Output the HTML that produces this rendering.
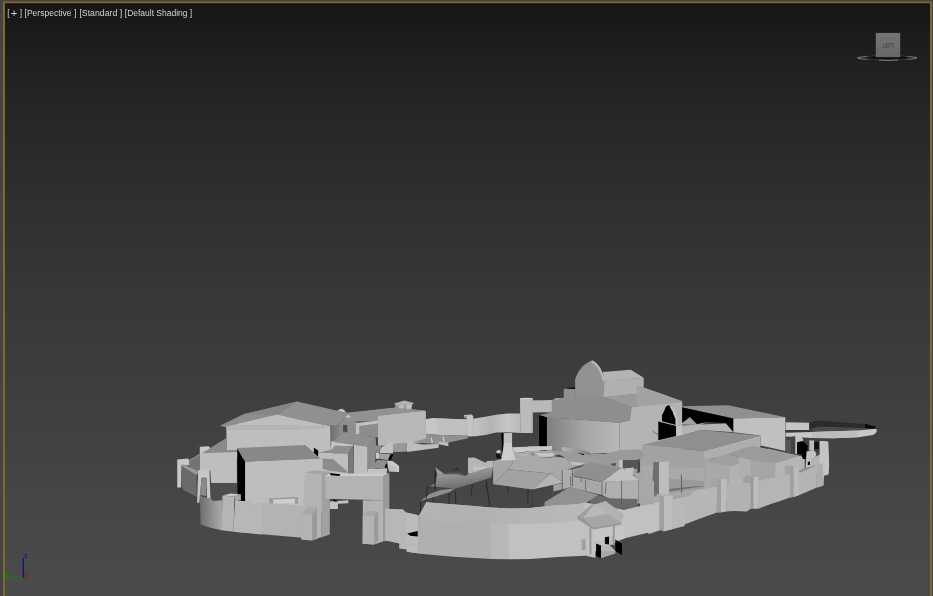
<!DOCTYPE html>
<html><head><meta charset="utf-8"><title>Perspective viewport</title>
<style>
html,body{margin:0;padding:0;background:#444;}
body{width:933px;height:596px;overflow:hidden;position:relative;font-family:"Liberation Sans","DejaVu Sans",sans-serif;}
#frame{position:absolute;left:0;top:0;width:933px;height:596px;background:#444;}
#gold{position:absolute;left:3px;top:1px;width:929px;height:600px;background:#80692b;}
#g1{position:absolute;left:3px;top:1px;width:929px;height:1px;background:#625637;}
#g3{position:absolute;left:5px;top:3px;width:925px;height:1px;background:#30291b;}
#vp{position:absolute;left:5px;top:3px;width:925px;height:593px;
background:linear-gradient(to bottom,#161616 0px,#161616 3px,#1e1e1e 49px,#252525 99px,#2f2f2f 199px,#383838 299px,#3f3f3f 399px,#464646 499px,#4b4b4b 593px);}
svg{position:absolute;left:0;top:0;}
</style></head>
<body>
<div id="frame"></div><div id="gold"></div><div id="vp"></div><div id="g1"></div><div id="g3"></div>
<svg style="will-change:transform" width="933" height="596" viewBox="0 0 933 596">
<defs>
<linearGradient id="cube" x1="0" y1="0" x2="0" y2="1"><stop offset="0" stop-color="#757575"/><stop offset="1" stop-color="#676767"/></linearGradient>
<linearGradient id="ringo" x1="0" y1="0" x2="1" y2="0"><stop offset="0" stop-color="#8c8c8c"/><stop offset="0.16" stop-color="#777"/><stop offset="0.2" stop-color="#2c2c2c"/><stop offset="0.8" stop-color="#2c2c2c"/><stop offset="0.84" stop-color="#777"/><stop offset="1" stop-color="#8c8c8c"/></linearGradient>
</defs>
<g id="model">
<polygon fill="#c8c8c8" points="177.2,459.6 188,458.5 189.7,460.9 189.7,465.4 181.6,464.9 181,487.6 177.2,487.6"/>
<polygon fill="#6a6a6a" points="181.6,464.9 196.6,474.6 196.6,497.1 183.7,489.9 181.6,486.7"/>
<polygon fill="#747474" points="189,460.6 199.6,454.4 199.6,470.2 197.1,474.5 189,465.9"/>
<polyline fill="none" stroke="#a8a8a8" stroke-width="0.8" points="189.4,460.4 199.6,454.4"/>
<polygon fill="#9a9a9a" points="182.9,464.1 198.7,471.4 196.6,474.9 181.6,466"/>
<polygon fill="#8d8d8d" points="219.9,425.8 243.3,414.2 297.3,401.6 277.9,414.5 226.7,427.4"/>
<polygon fill="#868686" points="243.3,414.2 297.3,401.6 277.9,414.5"/>
<polygon fill="#bebebe" points="226.4,426.7 277.9,414.5 332.7,427.4 332.7,457.7 226.4,457.7"/>
<polygon fill="#b4b4b4" points="226.4,426.7 234.4,425.1 320,424.5 332.7,427.4 332.7,430 226.4,430"/>
<polygon fill="#bebebe" points="226.7,426.4 277.9,414.5 329.5,426.4 320,424.5 234.4,424.8"/>
<polygon fill="#c6c6c6" points="199.8,446.7 208.7,446.2 210.3,448 210.3,454.4 199.8,454.4"/>
<polygon fill="#8a8a8a" points="201.4,453.5 226.4,438 226.4,449.9 237.3,449.9 237.3,453.5"/>
<polygon fill="#bebebe" points="199.8,453.3 236.9,452 236.9,483 211.1,483 210.3,470.6 199.8,470.6"/>
<polygon fill="#4d4d4d" points="211.1,483 236.9,483 236.9,502.8 211.1,502.8"/>
<polygon fill="#c6c6c6" points="198.2,469.9 209.5,468.9 210.6,502.8 207.1,501.2 206.4,477.8 201.6,477.8 199.3,502.8 197.1,502.8"/>
<polygon fill="#8a8a8a" points="201.6,478.3 206.4,478.3 206.1,496.3 200,494.7"/>
<polygon fill="#929292" points="346.2,412.7 395.8,407.5 425.9,410.8 400,413.7 378.4,416.3 378.4,421.5 343,421.5"/>
<polygon fill="#8e8e8e" points="342.7,420.2 356.9,421.5 356.9,435.4 347.3,432.8 342.7,432.2"/>
<polygon fill="#4c4c4c" points="343,424.7 347.3,424.9 347.3,432 343,431.7"/>
<polygon fill="#8c8c8c" points="359.6,425.6 378.8,423.4 378.8,437.8 359.6,434.9"/>
<polygon fill="#c2c2c2" points="355.9,423.1 378.8,420.6 378.8,423.6 359.6,425.9 359.6,434.8 355.9,434.2"/>
<polygon fill="#909090" points="296.8,401.5 337.6,410.7 347.3,413.3 343,420 336,425.9 325.8,425.3 300,420 277.9,414.5"/>
<polygon fill="#cacaca" points="337.4,410.7 339.2,409.5 342.1,408.8 344.6,410.5 346.4,412.7"/>
<polygon fill="#cacaca" points="344.9,417.8 348.3,414.8 351.3,417.2"/>
<polygon fill="#bebebe" points="298.9,420 325.8,425.3 330.1,425.8 330.3,449.9 298.9,445.6"/>
<polygon fill="#b5b5b5" points="298.9,426.5 325.2,425.3 325.2,428.5 298.9,429.4"/>
<defs><linearGradient id="gB" x1="0" x2="1" y1="0" y2="0"><stop offset="0" stop-color="#6c6c6c"/><stop offset="1" stop-color="#909090"/></linearGradient></defs>
<polygon fill="url(#gB)" points="330.1,425.8 336,425.9 343,420 343,432.4 331.4,441.5 330.5,449.9"/>
<polygon fill="#8f8f8f" points="343,432.2 347.3,432.4 375.8,437.6 367.7,446.4 353.7,444.7 331.7,441.5"/>
<polygon fill="#c4c4c4" points="331.7,441.5 353.7,444.7 352.6,446.4 335.4,445.8 331.7,449.6"/>
<polygon fill="#bebebe" points="353.7,444.7 367.7,446.4 367.7,477.3 353.7,477.3"/>
<polygon fill="#8a8a8a" points="367.7,446.4 375.8,437.6 375.8,451.6 374.1,477.3 367.7,477.3"/>
<polygon fill="#8f8f8f" points="331.8,449.6 335.4,445.8 352.8,446.3 348.3,453.4 318.3,452.8"/>
<polygon fill="#bebebe" points="318.3,453.1 348.3,453.4 348.3,477.3 318.3,477.3"/>
<polygon fill="#7a7a7a" points="348.3,453.4 352.8,446.3 353.7,477.3 348.3,477.3"/>
<polygon fill="#8d8d8d" points="317.6,456.7 321.4,458.5 333,459 347.3,471.4 347.3,472.9 328.3,470.4 321.4,468.6 321.4,458.7"/>
<polygon fill="#000" points="314,447.8 317.7,451.6 317.7,456.1 314,452.6"/>
<polygon fill="#bcbcbc" points="378.4,416.3 400,412.9 424.6,410.7 424.6,443 400,443.2 389.4,442.5 388.7,445.3 378.4,445.8"/>
<polygon fill="#8c8c8c" points="369.8,449 374.1,445.1 381.8,447 379.5,451.8"/>
<polygon fill="#c2c2c2" points="381.8,447 389.2,443.4 392.6,443 392.6,452.8 379.5,452.2"/>
<polygon fill="#c8c8c8" points="376.3,452.6 379.1,452.6 379.1,458.2 376.3,458.2"/>
<polygon fill="#909090" points="379.5,453.7 389.4,454.4 387.5,459.7 379.5,458.6"/>
<polygon fill="#000" points="391.3,454.2 393,454.8 390.4,459.7 388.7,459.1"/>
<polygon fill="#c6c6c6" points="425.6,419.3 432.3,418.1 466.7,419.5 466.7,435.6 436.6,434.8 425.6,433.7"/>
<polygon fill="#c0c0c0" points="437.1,418.4 466.7,419.5 466.7,435.6 437.1,434.8"/>
<polygon fill="#909090" points="412.4,442.3 425.6,433.7 436.6,434.8 467.2,435.8 468.3,438.2 448.9,442.5 438.7,444.2"/>
<polygon fill="#bdbdbd" points="406.5,440.1 410.8,439.3 412.5,442.7 422.6,444.6 438.7,444 438.7,447.8 407.1,452.1"/>
<polygon fill="#bdbdbd" points="438.7,441.4 448.4,442.5 448.4,446.3 438.7,444.2"/>
<polygon fill="#9a9a9a" points="393.1,444.4 406.5,442.3 407.1,451.1 393.1,452.1"/>
<polygon fill="#d0d0d0" points="430.7,437.4 431.9,437.4 432.9,442.9 431.5,442.9"/>
<polygon fill="#d0d0d0" points="442.5,436.4 443.7,436.4 444.8,441.4 443.4,441.4"/>
<polygon fill="#bdbdbd" points="395.3,404.2 412.1,404.2 411.5,409.2 395.8,408.5"/>
<polygon fill="#9a9a9a" points="395.3,404.2 399.2,404.2 399,408.5 395.8,408.3"/>
<polygon fill="#8e8e8e" points="404.2,404 406.1,404 406.1,409 404.2,409"/>
<polygon fill="#b2b2b2" points="394.1,403.4 404.4,400.6 414,403.1 412.1,404.7 395.6,404.7"/>
<polygon fill="#929292" points="367.9,410.7 395.6,407.8 425.9,410.9 378.1,416.1 367.9,417.1"/>
<polygon fill="#b8b8b8" points="378.1,416.1 425.9,410.9 425.9,438.4 412.4,442.3 410.8,439.3 406.5,440.1 406.5,442.3 393.1,444.4 378.1,445.7"/>
<polygon fill="#8f8f8f" points="369.5,448.7 375.4,445.5 381,448.2 378.6,452.1 369.5,450.4"/>
<polygon fill="#c2c2c2" points="380.7,448.2 387.7,444.6 389.3,442.3 392.8,442.8 393,452.1 380.2,453.2"/>
<polygon fill="#c8c8c8" points="375.9,453 378.6,453 378.6,458.6 375.9,458.6"/>
<polygon fill="#000" points="390.9,454.6 393.2,454.6 391.1,459.4 389.3,459.4"/>
<polygon fill="#8a8a8a" points="368,446.1 375.7,438.4 375.7,452.2 370.6,459.9 368,467.6"/>
<polygon fill="#8c8c8c" points="370.2,448.7 374.9,445.3 382.2,447 380,451.5"/>
<polygon fill="#c2c2c2" points="380,451.5 382.2,447 387.7,444.4 389.5,442.7 392.9,442.7 392.9,453.5 380.4,452.7"/>
<polygon fill="#999" points="392.9,444 406.6,442.7 406.6,451.5 392.9,451.9"/>
<polygon fill="#c8c8c8" points="376.2,452.6 378.8,452.6 378.8,458.3 376.2,458.3"/>
<polygon fill="#a0a0a0" points="379.2,453.4 390.3,454 387.7,460 379.2,458.7"/>
<polygon fill="#000" points="391.2,454.3 393,454.6 390.3,460 388.6,459.5"/>
<polygon fill="#8f8f8f" points="371,468.1 377.4,459.9 387,460.4 385.2,468.1"/>
<polygon fill="#000" points="385.6,464.6 387.1,464.2 386.4,468.1 384.7,468.1"/>
<polygon fill="#cacaca" points="386.9,460.7 392.9,461.2 399.1,465.9 399.1,472 389,471.5 387.7,464.6"/>
<polygon fill="#bfbfbf" points="388.3,464.3 396.3,466.9 396.3,471.2 389.2,471"/>
<polygon fill="#c4c4c4" points="368.4,469 386.9,468.3 386.9,473.8 366.3,474.6"/>
<polygon fill="#000" points="237.2,448 245.1,461.7 245.1,510 237.7,508.4"/>
<polygon fill="#888" points="237.2,448 305.3,445.1 320.6,458.5 245.1,461.7"/>
<polygon fill="#bebebe" points="245.1,461.7 320.6,458.5 322.7,459 322.7,512.4 245.1,510"/>
<polygon fill="#000" points="313.9,447.7 318.2,450.6 318.2,456.4 313.9,452.8"/>
<polygon fill="#9c9c9c" points="269.1,498.3 298.1,497.1 298.1,503.8 269.1,503.8"/>
<polygon fill="#cfcfcf" points="273.1,499.6 294.9,498.8 294.9,503.8 273.1,503.8"/>
<defs><linearGradient id="gA" x1="0" x2="1" y1="0" y2="0"><stop offset="0" stop-color="#6e6e6e"/><stop offset="1" stop-color="#ababab"/></linearGradient></defs>
<polygon fill="url(#gA)" points="199.8,494.6 203,497.1 210.3,498.3 213.2,501.1 221.9,500.3 221.9,530.2 210.3,527.7 200.6,524.4"/>
<polygon fill="#b3b3b3" points="235.2,501.1 248.9,501.1 253.8,504.3 257.8,503.5 263.4,502.7 303.7,505.9 302.4,537.7 233.6,531.7"/>
<polygon fill="#b7b7b7" points="235.2,501.1 248.9,501.1 253.8,504.3 257.8,503.5 262.6,502.9 261.8,534.4 233.6,531.7"/>
<polygon fill="#c4c4c4" points="222.4,495.4 230.4,493.5 240.9,494.3 234.4,496.4"/>
<polygon fill="#b5b5b5" points="222.4,495.8 234.4,496.4 233.6,531.7 221.6,530.2"/>
<polygon fill="#a6a6a6" points="234.4,496.4 240.9,494.3 240.9,500.6 235.2,501.2"/>
<polygon fill="#a8a8a8" points="302.1,513.5 307.7,506.7 317.4,507.5 312.6,514.1"/>
<polygon fill="#b6b6b6" points="302.1,513.5 312.6,514.1 311.8,540.4 301.8,539.7"/>
<polygon fill="#9a9a9a" points="312.6,514.1 317.4,507.5 317.4,538.9 311.8,540.4"/>
<polygon fill="#a5a5a5" points="304.8,472.9 312.1,470.5 329.8,471.6 321.7,474.2"/>
<polygon fill="#b3b3b3" points="304.8,473.7 321.7,474.2 321.7,537.3 312.1,539.7 301.6,538.9"/>
<polygon fill="#a0a0a0" points="321.7,474.2 329.8,471.6 329.8,534.4 321.7,537.3"/>
<polygon fill="#cdcdcd" points="325,476.1 329.8,473.5 389.4,473.5 383,476.1"/>
<polygon fill="#b3b3b3" points="325,476.1 383,476.1 383,500.3 325.8,498.7"/>
<polygon fill="#000" points="329.8,472.9 340.3,474.2 339.5,476.1 330.6,475.3"/>
<polygon fill="#9a9a9a" points="383,476.1 389.4,473.5 389.4,540.6 383,541.4"/>
<polygon fill="#b3b3b3" points="362.8,500.3 383,500.3 383,541.4 374.1,544.6 362.8,543.8"/>
<polygon fill="#c2c2c2" points="329.8,501.6 348.3,500.3 348.3,503.2 337.9,503.8 337.9,509.1 329.8,509.1"/>
<polygon fill="#000" points="333,498.7 337.9,501.6 333.8,501.6"/>
<polygon fill="#a8a8a8" points="301.6,514.8 308.1,506.7 316.9,507.5 312.1,514.8"/>
<polygon fill="#b3b3b3" points="301.6,514.8 312.1,514.8 312.1,540.2 301.3,538.9"/>
<polygon fill="#999" points="312.1,514.8 316.9,507.5 316.9,537.3 312.1,540.2"/>
<polygon fill="#a8a8a8" points="363.2,516.1 367.7,510.7 378.1,511.6 374.1,516.4"/>
<polygon fill="#b3b3b3" points="362.8,516.1 374.1,516.4 374.1,544.6 362.5,543.8"/>
<polygon fill="#999" points="374.1,516.4 378.1,511.6 378.1,540.6 374.1,544.6"/>
<defs><linearGradient id="gD" x1="0" x2="1" y1="0" y2="0"><stop offset="0" stop-color="#c4c4c4"/><stop offset="0.38" stop-color="#b4b4b4"/><stop offset="0.72" stop-color="#c6c6c6"/><stop offset="1" stop-color="#bababa"/></linearGradient></defs>
<polygon fill="url(#gD)" points="473.1,418.8 485.4,416.8 496.2,414.8 508,413.6 520.4,413.5 520.4,432.9 508,432.3 496.2,432.4 485.4,435.1 473.1,436.5"/>
<polygon fill="#c4c4c4" points="464,415.1 471.5,414.4 473.2,416.1 473.2,436.1 469.3,436.7 466.6,435.5 466.6,418.3 464,417.8"/>
<polygon fill="#8a8a8a" points="464,415.7 466.6,416 466.6,418.3 464,417.8"/>
<polygon fill="#bbbbbb" points="520,398.3 532.7,398 532.7,432.9 520.4,432.9"/>
<polygon fill="#adadad" points="531.4,399 532.7,399 532.7,432.9 531.4,432.9"/>
<polygon fill="#cbcbcb" points="520,398.3 525.2,397.7 532.7,398 532.7,399 520,399.2"/>
<polygon fill="#c4c4c4" points="532.7,400.9 568.2,399.2 568.2,410.8 532.7,412.5"/>
<polygon fill="#6a6a6a" points="539.2,415.1 557.4,413.1 557.4,417.2 547.2,417.7"/>
<polygon fill="#000" points="539.2,415.6 547.2,417.8 547.2,445.8 539.2,444.7"/>
<polygon fill="#8c8c8c" points="547.2,417.4 557.4,416.4 557.4,445.2 547.2,445.8"/>
<polygon fill="#000" points="501.3,432.9 503.7,432.9 503.7,453.7 502.2,453.7"/>
<polygon fill="#c0c0c0" points="503.7,432.9 512.1,432.9 512.1,453.7 503.7,453.7"/>
<polygon fill="#cacaca" points="512.1,447.2 550,445.9 568.2,446.1 568.2,450.4 531.6,451.1 514.4,453.2"/>
<polygon fill="#b0b0b0" points="515.5,453.2 531.6,451.5 568.2,450.6 568.2,457.1 518.7,457.1"/>
<polygon fill="#888" points="530.6,452.6 534.9,452.6 534.9,455.3 530.6,455.3"/>
<polygon fill="#c6c6c6" points="535.9,453.1 568.2,452.8 568.2,456.2 535.9,455.8"/>
<polygon fill="#a9a9a9" points="511.8,449.9 518.7,453.1 518.7,457.3 515.3,460.7 513.4,460.7"/>
<polygon fill="#cdcdcd" points="504.2,450.6 512.1,450.4 515.5,460.1 501.3,460.7"/>
<polygon fill="#c4c4c4" points="496.2,451.5 498.9,449.9 500.7,451.5 499.4,453.8 497.3,453.2"/>
<polygon fill="#111" points="496.2,453.8 498.5,453.4 500.5,459 496.4,457.7"/>
<polygon fill="#b6b6b6" points="468,457.7 474.5,457.4 485.4,462.7 487.1,461.1 493.2,460.8 493.2,467.6 485.4,468.9 473.1,473.2 468,473.6"/>
<polygon fill="#c6c6c6" points="473.1,466.5 482.2,467.2 485.4,466.5 485.4,468.2 473.8,470"/>
<defs><linearGradient id="gC1" x1="0.2" x2="0.6" y1="0" y2="1"><stop offset="0" stop-color="#b0b0b0"/><stop offset="0.5" stop-color="#8a8a8a"/><stop offset="1" stop-color="#6a6a6a"/></linearGradient></defs>
<defs><linearGradient id="gC1" x1="0" x2="1" y1="0" y2="0"><stop offset="0" stop-color="#a6a6a6"/><stop offset="0.35" stop-color="#a0a0a0"/><stop offset="0.62" stop-color="#808080"/><stop offset="0.85" stop-color="#9c9c9c"/><stop offset="1" stop-color="#a4a4a4"/></linearGradient><linearGradient id="gC0" x1="0" x2="0" y1="0" y2="1"><stop offset="0" stop-color="#222"/><stop offset="1" stop-color="#6a6a6a"/></linearGradient></defs>
<polygon fill="url(#gC0)" points="447.6,472.5 457.5,467.7 462.7,473.7 464.7,476 456.2,474.8 445,474.2"/>
<polygon fill="#9a9a9a" points="435.2,467.3 444.7,474.2 437.5,474.8"/>
<polygon fill="url(#gC1)" points="437.3,474.6 445,474.2 457,474.2 464.7,476 470.7,472.9 481.9,470.3 493.2,466.4 491.3,477.2 483.6,479.9 471.6,483.7 455.3,488.5 430,486.2 435.6,482.8 436.4,478.4"/>
<polygon fill="#8e8e8e" points="420.1,501.2 429.6,494.1 440.7,490 455.3,488.3 449.3,492.2 436.4,496.2"/>
<polyline fill="none" stroke="#1c1c1c" stroke-width="1" points="435.3,470.3 434.9,490"/>
<polyline fill="none" stroke="#1c1c1c" stroke-width="0.7" points="427.4,485.9 425.8,502.8"/>
<polyline fill="none" stroke="#1c1c1c" stroke-width="0.7" points="433.3,497.7 433,502"/>
<polyline fill="none" stroke="#1c1c1c" stroke-width="0.7" points="449.1,493.2 449.1,503.2"/>
<polyline fill="none" stroke="#1c1c1c" stroke-width="0.7" points="455.6,491.6 455.6,503.8"/>
<polyline fill="none" stroke="#1c1c1c" stroke-width="0.7" points="472.5,484.3 470.9,495.6"/>
<polyline fill="none" stroke="#1c1c1c" stroke-width="0.7" points="486.2,480.3 489.7,506.1"/>
<polyline fill="none" stroke="#1c1c1c" stroke-width="0.7" points="420.6,501.2 420.6,514.4"/>
<polyline fill="none" stroke="#1c1c1c" stroke-width="0.7" points="508.3,486.7 508.3,491.6"/>
<polyline fill="none" stroke="#1c1c1c" stroke-width="0.7" points="528.1,489.1 527.8,503.6"/>
<polyline fill="none" stroke="#1c1c1c" stroke-width="0.7" points="532.1,488.3 532.4,506.9"/>
<polygon fill="#b8b8b8" points="531.6,400.3 551.7,400.7 551.7,412.5 531.6,412"/>
<polygon fill="#b4b4b4" points="602.8,371.9 630.7,369.7 643.7,377.7 604.4,380.9"/>
<polygon fill="#b0b0b0" points="603.8,380.6 643.7,377.7 643.7,393.2 602.8,397.4"/>
<path fill="#929292" d="M575.1,398.3 L575.1,379.3 C578.3,369.3 584.8,363.2 590.9,361 C597.7,362.9 602.5,372.6 604.6,381.4 L603.3,398.3 Z"/>
<path fill="none" stroke="#b8b8b8" stroke-width="2.2" d="M591.5,361.3 C597.7,363.5 601.9,372.6 603.8,380.9"/>
<polygon fill="#000" points="567.4,388 575.1,387.4 575.1,389.3 567.4,389.3"/>
<polygon fill="#909090" points="563.8,388.7 575.4,389 575.4,399.1 563.8,399.1"/>
<polygon fill="#8e8e8e" points="551.7,400.3 555.5,398.3 563.8,397.7 603.3,397 631.5,406.7 629.9,420.2 619.4,422.8 546.1,417 539.7,415.2 551.7,412.2"/>
<polygon fill="#c0c0c0" points="555,398.7 560.6,398 555.8,399.9"/>
<polygon fill="#9b9b9b" points="603.3,397 643.7,392.9 643.7,388.3 682.1,401.1 682.1,404.5 631.5,407"/>
<polygon fill="#b4b4b4" points="631.5,407 682.1,404.5 682.1,453.1 619.4,453.1 619.4,422.8 629.9,420.2"/>
<defs><linearGradient id="gE" x1="0" x2="1" y1="0" y2="0"><stop offset="0" stop-color="#7e7e7e"/><stop offset="0.55" stop-color="#a8a8a8"/><stop offset="1" stop-color="#b8b8b8"/></linearGradient></defs>
<polygon fill="url(#gE)" points="546.1,417 619.4,422.8 619.4,453.1 546.1,453.1"/>
<polygon fill="#000" points="539.3,415.2 546.9,417.3 546.9,453.1 539.3,453.1"/>
<path fill="#000" d="M658.1,440.2 L658.1,421.7 L662.1,414.8 L664.7,409 L668.6,404.8 L672.4,409.6 L674.4,414.8 L677.4,418 L677.4,435.4 L666.9,438.3 Z"/>
<polyline fill="none" stroke="#c8c8c8" stroke-width="2" points="668.9,404.9 673.1,409.9 675,415.1 677.9,418.3 677.9,425.7"/>
<polygon fill="#888" points="652.4,430.6 658.1,433.8 658.1,435.4 653.1,432.2"/>
<polygon fill="#9b9b9b" points="551.5,450.7 590.2,452.9 605.2,453.7 619.2,450.3 637.4,449 637.4,475.4 551.5,472.2"/>
<polygon fill="#c8c8c8" points="527.9,446.4 552,445.9 552,449.7 527.9,451.4"/>
<polygon fill="#a8a8a8" points="527.9,451.4 551.5,450.2 555.3,454 540.7,456.8 527.9,456.1"/>
<polygon fill="#c6c6c6" points="534.3,452.9 554.7,453.5 553.1,456.1 540.7,456.8"/>
<polygon fill="#888" points="530.9,452.7 534.3,452.9 534.8,455.6 531.1,455.3"/>
<defs><linearGradient id="gF" x1="0" x2="1" y1="0" y2="0"><stop offset="0" stop-color="#b4b4b4"/><stop offset="1" stop-color="#7c7c7c"/></linearGradient></defs>
<polygon fill="url(#gF)" points="562.2,446.9 578.3,448.6 590.2,452.5 591.4,455.3 581.6,454.6 562.2,450.7"/>
<polygon fill="#111" points="577.3,453.1 584.2,454 583.7,455.3"/>
<polygon fill="#444" points="553.1,456.3 559,454.5 565.4,457.7"/>
<polygon fill="#c2c2c2" points="619.2,459.9 622.6,459.9 622.6,468.1 619.2,467.1"/>
<polygon fill="#555" points="623,459.9 637.4,459.9 637.4,469 623,467.9"/>
<polygon fill="#555" points="610,463.8 615.9,463.1 615.9,465.8 612.7,465.8"/>
<polygon fill="#a6a6a6" points="493.1,461.1 501.1,459 517.2,456.3 508.1,469.2 493.1,484.2"/>
<polygon fill="#a9a9a9" points="508.1,469.2 517.2,456.3 564.5,457.9 574.2,465.4 550.5,473.5"/>
<polygon fill="#a2a2a2" points="493.1,484.2 508.1,469.2 550.5,473.5 532.3,489.6"/>
<polygon fill="#b5b5b5" points="532.3,489.6 550.5,473.5 563.4,482.6"/>
<polygon fill="#a9a9a9" points="550.5,473.5 574.2,465.4 574.2,480.4 563.4,482.6"/>
<polygon fill="#cdcdcd" points="504.1,442.9 511.1,442.9 515.6,460 501.1,460.7"/>
<polygon fill="#c4c4c4" points="496.3,451.4 499,449.8 501.1,451.4 499.5,453.6 497.4,453.4"/>
<polygon fill="#111" points="496.3,453.8 499.7,453.6 501.1,459 496.3,457"/>
<polygon fill="#acacac" points="562.2,470.3 572.5,469 572.5,486.4 562.2,489.6"/>
<polygon fill="#a4a4a4" points="553.1,485.1 562.2,483.2 562.2,489.6 553.1,491.6"/>
<polygon fill="#c2c2c2" points="569.7,461.5 584.2,463.1 580.5,465.3 573,464.9"/>
<polygon fill="#555" points="567.1,469.2 585,464.2 581.6,467.1 572.5,469.6"/>
<polygon fill="#a8a8a8" points="570.8,476 602,482.1 602,495 570.8,487.5"/>
<polygon fill="#afafaf" points="602,482.1 638.7,479.3 638.7,503.8 621.5,504.8 602,495"/>
<polygon fill="#8f8f8f" points="570.2,475 590.2,462 619.2,467.4 621.5,467.9 602,482.1"/>
<polygon fill="#c0c0c0" points="602,482.1 621.5,468.1 638.7,479.1 638.7,480"/>
<polygon fill="#919191" points="544.5,502.3 569.7,486.8 598.7,495 590.2,500.4 575.1,508.7 544.5,508.7"/>
<polygon fill="#6a6a6a" points="590.2,500.4 598.7,495.2 609.5,498.2 637.4,498.9 637.4,508.7 590.2,508.7"/>
<polyline fill="none" stroke="#555" stroke-width="0.7" points="562.2,470.3 562.2,489.6"/>
<polyline fill="none" stroke="#555" stroke-width="0.7" points="572.5,469.2 572.5,486.4"/>
<polyline fill="none" stroke="#555" stroke-width="0.7" points="570.6,476.3 570.6,486.2"/>
<polyline fill="none" stroke="#555" stroke-width="0.7" points="585.6,480.3 585.6,490.5"/>
<polyline fill="none" stroke="#555" stroke-width="0.7" points="602,482.3 602,495"/>
<polyline fill="none" stroke="#555" stroke-width="0.7" points="621.5,480.8 621.5,504.4"/>
<polyline fill="none" stroke="#555" stroke-width="0.7" points="553.1,485.6 553.1,495.9"/>
<polyline fill="none" stroke="#555" stroke-width="0.7" points="532.1,489 532.1,504.4"/>
<polyline fill="none" stroke="#555" stroke-width="0.7" points="581.3,478.7 581.3,482.4"/>
<polyline fill="none" stroke="#555" stroke-width="0.7" points="606,482.4 605.2,494.2"/>
<polygon fill="#909090" points="681.7,406.2 728.1,405.2 785.3,417.3 733.4,418.4 680.3,407"/>
<polygon fill="#000" points="680.3,407 733.4,418.4 733.4,432.2 725.9,423.1 706.6,422.1 696.9,424 689.9,417 680.3,424.2"/>
<polygon fill="#a2a2a2" points="680.3,424.6 689.9,417.2 696.9,424.2 706.8,422.3 700.2,424.9"/>
<polygon fill="#b4b4b4" points="681.9,425.6 700.2,424.6 725.9,423.4 733.4,432.2 701.2,430 681.9,435.6"/>
<polygon fill="#c0c0c0" points="733.4,418.4 785.3,417.3 785.3,450.9 760.4,445.5 760.4,435.6 733.4,432.2"/>
<polygon fill="#a2a2a2" points="636.8,385 665.2,395 682.1,401.4 682.1,402.7 636.8,406.4"/>
<polygon fill="#b3b3b3" points="636.8,406.4 682.1,402.3 682.1,435.8 642.1,445.5 636.8,446.6"/>
<path fill="#000" d="M662,421.3 L662,415 L664.2,411.1 L665.8,406.8 L668.5,405.1 L671.1,407.2 L673.3,411.1 L674.9,416.5 L676.1,418.2 L676.1,425.1 Z"/>
<polygon fill="#000" points="658.3,421.5 676.1,425.9 676.1,436 658.3,440.3"/>
<polyline fill="none" stroke="#c4c4c4" stroke-width="2.2" points="670.9,406.6 673.7,411.3 675.7,417.1 676.6,418.4 676.6,425.3"/>
<polygon fill="#c4c4c4" points="676.3,425.8 682.1,425.6 682.1,435 676.3,436.2"/>
<polygon fill="#777" points="652.4,430.4 658.3,434.3 658.3,435.8 652.9,431.7"/>
<polygon fill="#8f8f8f" points="642.1,445.1 676.1,436.5 701.2,430 760.4,435.6 704.4,451.1"/>
<polygon fill="#a2a2a2" points="642.1,445.1 704.4,451.1 704.4,480.9 642.1,480.9"/>
<polygon fill="#aeaeae" points="704,450.9 760.4,435.6 760.4,447.6 727.3,454.9 704,460.5"/>
<polygon fill="#a3a3a3" points="640,456.1 753.1,460.9 753.1,493.2 717.7,501.2 672.6,507.7 640,510.9"/>
<polygon fill="#a9a9a9" points="641.9,465.8 704,468.2 704,488.3 641.9,504.4"/>
<polygon fill="#9b9b9b" points="727.3,453.7 753.1,446.4 800,456.1 774.9,463.5 749.9,460.3"/>
<polygon fill="#a5a5a5" points="750.2,460.3 774.9,463.8 774.9,478.7 750.2,482.2"/>
<polygon fill="#b5b5b5" points="774.9,463.8 800,456.1 804.7,457.7 804.7,477.1 774.9,478.7"/>
<polygon fill="#a0a0a0" points="705.6,460.9 727.3,453.7 750.2,460.3 729.7,466.7"/>
<polygon fill="#a9a9a9" points="704.8,461.6 729.7,466.7 729.7,488.3 704.8,491.6"/>
<polygon fill="#b3b3b3" points="729.7,466.7 750.7,460.3 750.7,482.2 729.7,486.7"/>
<polygon fill="#9a9a9a" points="669.3,478.7 704,481.1 704,488.3 669.3,493.2"/>
<polygon fill="#6e6e6e" points="669.3,489.1 698.3,485.9 704.8,486.1 669.3,491.2"/>
<polyline fill="none" stroke="#555" stroke-width="0.8" points="681.4,474.6 681.7,493.2"/>
<polygon fill="#6e6e6e" points="653.5,461.9 659,461.9 659,495.6 653.5,496.7 651.3,502"/>
<polygon fill="#bdbdbd" points="659,461.9 668.7,461.4 668.7,494.8 659,495.6"/>
<polygon fill="#b8b8b8" points="648.4,503.2 660,501.7 660,530.2 648.4,534.2"/>
<polygon fill="#b6b6b6" points="672.6,499.9 689.5,495.6 693.5,491.6 698.3,489.9 716.9,486.7 716.9,512.5 698.3,519.3 672.6,528.9"/>
<polygon fill="#b2b2b2" points="726.5,485.4 733.8,483.8 742.6,482.2 751.5,481.2 751.5,508.3 746.7,511.5 733.8,511 726.5,511.5"/>
<polygon fill="#b6b6b6" points="758.3,481.2 772.4,478 789.8,474.5 789.8,497.4 778.9,501.5 758.3,506.4"/>
<polygon fill="#b4b4b4" points="797.4,472.2 804.7,470.6 804.7,492.4 797.4,495.1"/>
<polygon fill="#a2a2a2" points="653.5,496.4 659.7,494.5 669,494.9 672.9,496.1 663.7,496.7"/>
<polygon fill="#9a9a9a" points="659.7,496.7 663.9,496.1 663.9,530.9 659.7,529.6"/>
<polygon fill="#b9b9b9" points="663.9,496.1 672.9,496.1 672.9,528.9 663.9,530.9"/>
<polygon fill="#a4a4a4" points="710.4,479.6 715.2,477.4 721.2,479.6 717.3,487 710.4,486.7"/>
<polygon fill="#a0a0a0" points="717,480.3 721,479.8 721,512.5 717,512.8"/>
<polygon fill="#bcbcbc" points="721,479.6 726.7,479 726.7,511.5 721,512.5"/>
<polygon fill="#a4a4a4" points="743.1,476.4 748.3,475.1 754.1,477.4 750.9,482.2 743.1,482.2"/>
<polygon fill="#a0a0a0" points="750.7,478 754.1,477.4 754.1,507.7 750.7,508.8"/>
<polygon fill="#bcbcbc" points="754.1,477.2 758.4,476.7 758.4,506.4 754.1,507.7"/>
<polygon fill="#a4a4a4" points="784.5,466.1 790.2,464.8 794.5,466.7 790.2,474.6 784.5,474.6"/>
<polygon fill="#a0a0a0" points="789.8,466.7 794.4,466.7 794.4,496.7 789.8,498"/>
<polygon fill="#bcbcbc" points="794.4,466.7 797.6,466.6 797.6,495.1 794.4,496.7"/>
<polygon fill="#c6c6c6" points="785.6,422.2 809.3,422.7 809.3,429.9 785.6,430.1"/>
<polygon fill="#383838" points="785.6,430.1 811.4,429.9 811.4,432.1 785.6,432.7"/>
<polygon fill="#4a4a4a" points="809.3,429.9 817.3,426.5 865.1,428 876.3,428.8 858.1,430.6 813,432.1"/>
<polygon fill="#2b2b2b" points="809.3,422.8 817.3,420.6 865.1,423.9 876.3,426.1 876.3,429.1 865.1,428.1 817.3,426.5 809.3,429.7"/>
<polygon fill="#0a0a0a" points="865.1,423.9 874.7,426.5 875.8,428.8 865.1,428.2"/>
<path fill="#c8c8c8" d="M785.6,432.7 L811.9,432 L858.1,430.6 L875.8,428.8 C877.4,429.7 877.4,433.1 873.1,434.9 L858.1,437.2 L834.4,438.2 L811.9,437.9 L785.6,436.4 Z"/>
<polygon fill="#bdbdbd" points="811.9,432 858.1,430.6 858.1,437.2 834.4,438.2 811.9,437.9"/>
<polygon fill="#555" points="785.6,440.4 791.1,439.6 791.1,452.5 785.6,452.3"/>
<polygon fill="#444" points="791.1,436.8 795.3,436.1 795.3,454 791.1,452.5"/>
<polygon fill="#c6c6c6" points="795.3,436.1 801.4,436.1 803.5,440.4 797.1,442.2 797.1,454 795.3,454"/>
<polygon fill="#000" points="797.1,442.2 803.5,441.3 807.8,445.8 806.7,458.7 802.2,458.9 801.8,454.6 797.1,454"/>
<polygon fill="#bbb" points="809.3,440.4 814,440.4 814,450.6 809.3,450.6"/>
<polygon fill="#111" points="814.3,442.1 818.9,441.5 818.9,449 814.3,449.6"/>
<polygon fill="#c8c8c8" points="819.9,440.9 828,441.5 828.6,473.7 822.6,473.7 822.6,448.2 819.9,447.5"/>
<polygon fill="#222" points="821,447.1 822.8,447.1 822.8,449 821,448.8"/>
<polygon fill="#a0a0a0" points="767.9,448.5 801.1,456.6 802.2,460 775.4,465.4 767.9,463.5"/>
<polygon fill="#b4b4b4" points="775.4,465.4 802.2,460 802.2,473.7 775.4,473.7"/>
<polygon fill="#a8a8a8" points="767.9,463.5 775.4,465.4 775.4,473.7 767.9,473.7"/>
<polygon fill="#c2c2c2" points="806.5,451.4 814,450.3 816.4,453.5 810.8,473.7 805.4,473.7"/>
<polygon fill="#b4b4b4" points="810.8,458.9 821.6,453.5 828.5,453.5 828.5,473.7 810.8,473.7"/>
<polygon fill="#000" points="807.8,461.9 810,461.5 810,464.7 807.8,465.2"/>
<polygon fill="#c4c4c4" points="819.7,441.1 828.3,441.7 829.2,465.8 828.3,474.6 824,475.7 823.4,485.6 817.3,487.5 816.9,464.9 819.7,464.2"/>
<polygon fill="#adadad" points="816.9,464.9 822.7,463.1 823.4,485.6 817.3,487.5"/>
<polygon fill="#9b9b9b" points="738.9,449.5 752.9,445.9 800.2,456.1 775.4,463.2 750.7,459.5 738.9,457.2"/>
<polygon fill="#b0b0b0" points="738.9,457.2 750.7,459.8 750.7,477.1 738.9,481.4"/>
<polygon fill="#a5a5a5" points="750.7,459.8 775.4,463.2 775.4,476 758.8,480.6 750.7,477.1"/>
<polygon fill="#b5b5b5" points="775.4,463.2 800.2,456.1 802.5,457.2 802.5,469.2 798.5,471.4 798.5,467.1 793.7,466.4 787.3,465.3 784.6,467.1 784.6,474.6 775.4,476"/>
<polygon fill="#b5b5b5" points="758.3,481 771.1,477.8 775.4,477.2 790.1,474.4 790.1,497.1 772.2,503.6 758.3,508.7 758.3,504.4"/>
<polygon fill="#b4b4b4" points="798.5,472.4 802.5,469.2 804.4,468.1 816.9,464.9 816.9,487.5 798.5,495.5"/>
<polygon fill="#8f8f8f" points="798.5,471.1 804.4,468.1 816.9,464.9 815.2,465.8 800.2,472.8"/>
<polygon fill="#a0a0a0" points="743.2,477.2 747.5,475 752.9,477.2 757.8,476.9 753.1,478.9 750.7,483.2 743.2,482.5"/>
<polygon fill="#999" points="750.7,477.8 753.5,477.6 753.5,508.7 750.7,508.7"/>
<polygon fill="#bcbcbc" points="753.5,477.2 758.4,476.5 758.4,508.7 753.5,508.7"/>
<polygon fill="#a4a4a4" points="784.6,467.1 787.9,465.3 793.7,466.4 790.1,474.6 784.6,474.6"/>
<polygon fill="#a0a0a0" points="789.9,467.5 793.8,466.9 793.8,497.1 789.9,497.1"/>
<polygon fill="#bcbcbc" points="793.8,466.6 798.6,466.9 798.6,495.5 793.8,497.1"/>
<polygon fill="#b7b7b7" points="385.2,508.8 402.9,509.3 406.1,512.5 418.5,515.3 418.5,553.3 406.8,551.7 406.8,549.6 399.2,548.5 399.2,543.6 385.2,540.4"/>
<polygon fill="#bcbcbc" points="406.1,512.5 418.5,515.3 418.5,553.3 406.8,551.7 406.8,536.4"/>
<polyline fill="none" stroke="#a8a8a8" stroke-width="0.6" points="406.8,544.8 418,545.7"/>
<polygon fill="#000" points="407.2,533.6 417.7,530.9 417.7,536.4 410.3,535.7"/>
<defs><linearGradient id="gK" gradientUnits="userSpaceOnUse" x1="417" x2="660" y1="0" y2="0"><stop offset="0" stop-color="#b0b0b0"/><stop offset="0.302" stop-color="#b0b0b0"/><stop offset="0.308" stop-color="#b8b8b8"/><stop offset="0.374" stop-color="#b8b8b8"/><stop offset="0.380" stop-color="#c1c1c1"/><stop offset="1" stop-color="#c1c1c1"/></linearGradient><linearGradient id="gKt" gradientUnits="userSpaceOnUse" x1="417" x2="660" y1="0" y2="0"><stop offset="0" stop-color="#b4b4b4"/><stop offset="0.28" stop-color="#b1b1b1"/><stop offset="0.31" stop-color="#b3b3b3"/><stop offset="0.6" stop-color="#b8b8b8"/><stop offset="1" stop-color="#bebebe"/></linearGradient></defs>
<polygon fill="url(#gK)" points="426.6,501.7 429,502.6 470.9,505.8 490.2,507.4 509.6,508.4 530,508 551,505.8 578.3,504.2 585.3,502.6 623.9,509.8 641.7,505.8 658.9,502.6 658.9,530.3 624.7,538.3 585.3,555.7 562.2,556.8 530,559.1 509.6,559.3 491.8,558.9 453.2,556.7 417.7,553.5 418.5,516.2"/>
<polygon fill="url(#gKt)" points="426.6,501.7 429,502.6 470.9,505.8 490.2,507.4 509.6,508.4 530,508 551,505.8 578.3,504.2 585.3,502.6 585.3,520.3 551,523.2 509.6,524 470.9,523.2 440.3,521.6 418.8,516.7"/>
<polygon fill="#b0b0b0" points="654.1,494.8 660.8,493.7 672.1,495.3 663.7,496.3"/>
<polygon fill="#a0a0a0" points="659.7,496.1 663.9,496.1 663.9,531.4 659.7,530.1"/>
<polygon fill="#bdbdbd" points="663.9,496.1 672.1,495.3 672.1,529.3 663.9,531.4"/>
<polygon fill="#b8b8b8" points="672.1,499.3 684.7,497.4 684.7,525.9 672.1,529.3"/>
<polygon fill="#c6c6c6" points="594.4,528.3 623.8,525.9 624.4,539 594.4,539.9"/>
<polygon fill="#a0a0a0" points="581.6,539.3 585.7,539.3 585.7,550.2 581.6,550.2"/>
<polygon fill="#c4c4c4" points="585.7,539.6 595.4,538.8 595.4,557.7 586.4,556"/>
<polygon fill="#000" points="596.1,543.6 601,545.4 601,558.3 596.1,555.9"/>
<polygon fill="#000" points="604.9,537.2 609.1,536.4 609.1,544.8 604.9,543.8"/>
<polygon fill="#bbb" points="609.1,536.4 613.9,535.6 613.9,544.8 609.1,544.8"/>
<polygon fill="#000" points="615.4,539.6 622,543.8 622,555.1 615.4,551"/>
<polygon fill="#b6b6b6" points="601,545.4 609.1,544.4 615.4,550.9 601,550.9"/>
<polygon fill="#a8a8a8" points="601,550.6 615.4,550.9 615.4,553.5 601,558.3"/>
<polygon fill="#999" points="589.4,525.9 591.4,525.9 591.4,554.4 589.4,554.4"/>
<polygon fill="#999" points="612.8,525.1 614.7,525.1 614.7,544.8 612.8,544.8"/>
<polygon fill="#a0a0a0" points="577.2,516.7 592,504.2 594.8,504.5 583.2,518"/>
<polygon fill="#b2b2b2" points="594.4,504.5 605.7,500.9 623.8,514.8 621.2,522.4 607.3,513.8"/>
<polygon fill="#b9b9b9" points="583.2,518 594.4,504.5 607.3,513.8"/>
<polygon fill="#a6a6a6" points="583.2,518 607.3,513.8 621.2,522.4 593.6,527.7"/>
<polygon fill="#979797" points="577.2,516.7 583.2,518 593.6,527.7 621.2,522.4 621.2,524.5 593.6,529.5 577.2,518.8"/>
<polygon fill="#a7a7a7" points="633,474.6 642.2,471.4 642.2,479.7 654,480.8 654,504.4 639,503.4 639,479.5"/>
<polygon fill="#555" points="622.8,460.4 640.1,459.9 640.1,461.7 630.8,466.9 622.8,467.5"/>
<polygon fill="#c2c2c2" points="625.4,468.5 634,467.4 633,474.4 625.4,471.4"/>
<polygon fill="#9a9a9a" points="606.1,454 641.6,449.5 642.2,459.3 622.2,460 606.1,457.2"/>
</g>
<g id="label" font-family="Liberation Sans, DejaVu Sans, sans-serif" font-size="8.3" fill="#d4d4d4">
<text y="15.9"><tspan x="7.2">[</tspan><tspan x="11.1" y="16.9" font-size="10.6">+</tspan><tspan x="19.7" y="15.9">]</tspan></text>
<text x="24.5" y="15.9" textLength="51.8" lengthAdjust="spacingAndGlyphs">[Perspective ]</text>
<text x="79.4" y="15.9" textLength="42.8" lengthAdjust="spacingAndGlyphs">[Standard ]</text>
<text x="124.8" y="15.9" textLength="67.4" lengthAdjust="spacingAndGlyphs">[Default Shading ]</text>
</g>
<!-- viewcube -->
<g id="viewcube">
<ellipse cx="887.2" cy="57.9" rx="29.6" ry="1.9" fill="#161616" stroke="url(#ringo)" stroke-width="1"/>
<ellipse cx="887.6" cy="57.7" rx="21.8" ry="2.5" fill="#121212" stroke="#3c3c3c" stroke-width="0.8"/>
<path d="M879,60 Q888,60.9 898,59.9" fill="none" stroke="#8a8a8a" stroke-width="0.9"/>
<rect x="875.8" y="32.9" width="24.4" height="24.2" fill="url(#cube)"/>
<rect x="880.6" y="38.6" width="14.4" height="13.6" fill="none" stroke="#666" stroke-width="0.5" stroke-dasharray="0.7 0.9"/>
<text x="882.6" y="47.9" font-size="6.8" font-weight="bold" fill="#4a4a4a" textLength="11.2" lengthAdjust="spacingAndGlyphs" font-family="Liberation Sans, sans-serif">LEFT</text>
</g>
<!-- axis gizmo -->
<g id="axis">
<line x1="9" y1="577.2" x2="23.3" y2="577.2" stroke="#0c820c" stroke-width="1.3"/>
<line x1="23.3" y1="558" x2="23.3" y2="577.8" stroke="#0a0ab4" stroke-width="1.3"/>
<text x="23.9" y="557.8" font-size="7" font-weight="bold" fill="#1414c8" font-family="Liberation Sans, sans-serif">z</text>
<text x="5.3" y="576.9" font-size="7.5" font-weight="bold" fill="#0c8c0c" font-family="Liberation Sans, sans-serif">y</text>
<text x="24" y="577.8" font-size="7.5" font-weight="bold" fill="#a01414" font-family="Liberation Sans, sans-serif">x</text>
</g>
</svg>
</body></html>
